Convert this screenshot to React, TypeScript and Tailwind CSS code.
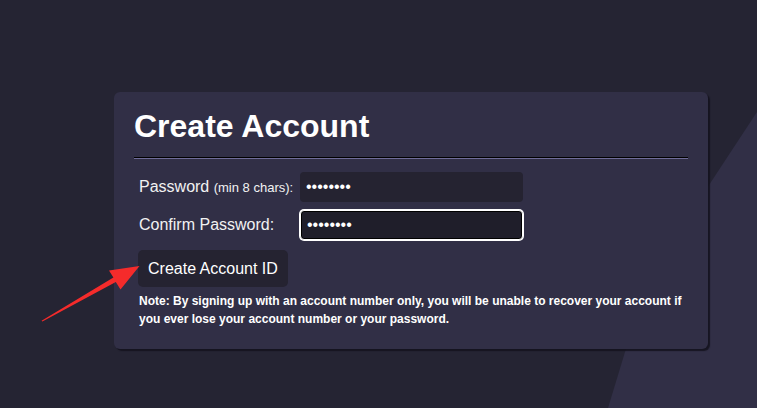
import React from "react"

function Backdrop() {
  return (
    <svg className="absolute inset-0 h-full w-full" viewBox="0 0 757 408" preserveAspectRatio="none">
      <path d="M757 112 L711 182 Q660 260 625 352 L608 408 L757 408 Z" fill="#312f46" />
    </svg>
  )
}

function Arrow() {
  return (
    <svg className="pointer-events-none absolute left-0 top-0" width="757" height="408" viewBox="0 0 757 408">
      <polygon
        points="41.6,320.7 113.4,277.6 109,270.4 139.5,266 120.5,289.5 115.8,282 42.4,321.5"
        fill="#f52b2b"
      />
    </svg>
  )
}

export default function App() {
  return (
    <div className="relative h-[408px] w-full overflow-hidden bg-[#252433] font-['Liberation_Sans',Arial,sans-serif] text-white">
      <Backdrop />
      <div className="relative ml-[114px] pt-[92px]">
        <div className="w-[594px] rounded-md bg-[#312f46] px-5 pt-4 pb-[21px] shadow-[2px_2px_1px_rgba(20,19,30,0.9)]">
          <h2 className="text-[32px] leading-[37px] font-bold">Create Account</h2>
          <div className="mt-3 border-t border-b border-t-black border-b-[#6f6c99]" />

          <div className="ml-1 mt-[13px]">
            <div className="grid grid-cols-[162px_223px] items-center gap-y-2">
              <label className="pl-[1px] text-[16px] text-[#f2f2f2]">
                Password <span className="text-[13px]">(min 8 chars):</span>
              </label>
              <input
                type="password"
                readOnly
                value="abcdefgh"
                className="h-[30px] w-[223px] rounded bg-[#252331] px-[6px] text-[16px] text-white outline-none"
              />
              <label className="pl-[1px] text-[16px] text-[#f2f2f2]">Confirm Password:</label>
              <input
                type="password"
                readOnly
                value="abcdefgh"
                className="h-[30px] w-[223px] rounded border border-white bg-[#1f1e2a] px-[6px] text-[16px] text-white outline-none shadow-[0_0_0_1px_#ffffff,inset_0_0_0_1px_#000000]"
              />
            </div>

            <button className="mt-[10px] h-[37px] rounded-[5px] bg-[#252331] px-[10px] text-[16px] text-white">
              Create Account ID
            </button>

            <p className="mt-[5px] pl-[1px] text-[12px] leading-[18px] font-bold">
              Note: By signing up with an account number only, you will be unable to recover your account if you
              ever lose your account number or your password.
            </p>
          </div>
        </div>
      </div>
      <Arrow />
    </div>
  )
}
